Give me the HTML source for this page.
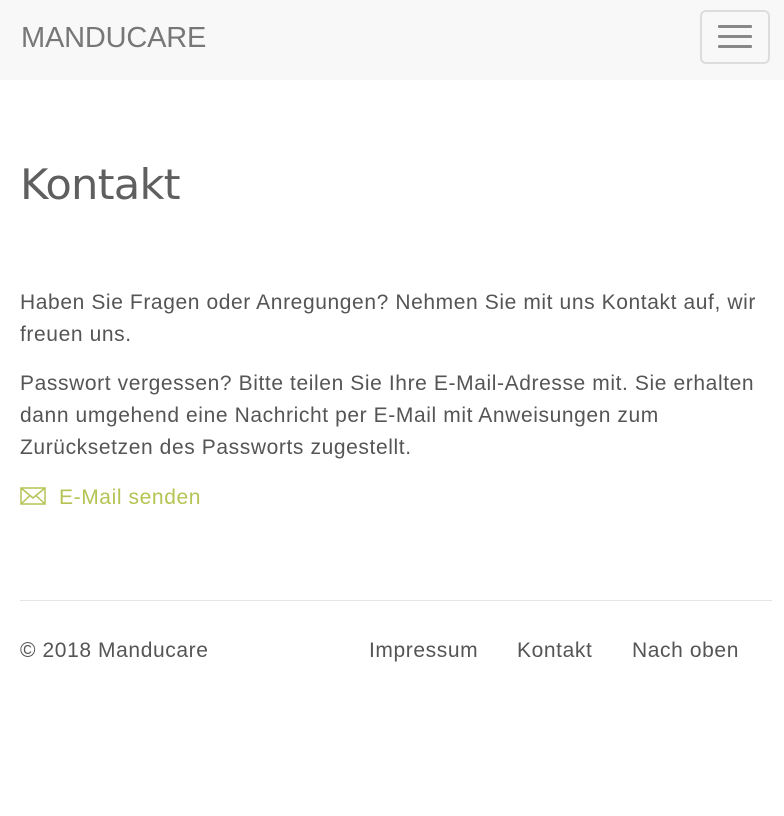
<!DOCTYPE html>
<html><head><meta charset="utf-8"><style>
*{margin:0;padding:0;box-sizing:border-box}
body{width:784px;height:816px;background:#fff;font-family:"Liberation Sans",sans-serif;color:#555;position:relative;overflow:hidden}
.nav{position:absolute;left:0;top:0;width:784px;height:80px;background:#f8f8f8}
.brand{position:absolute;left:21px;top:22px;font-size:29px;color:#777;letter-spacing:-0.2px}
.tog{position:absolute;left:700px;top:10px;width:70px;height:54px;border:2px solid #ddd;border-radius:6px}
.tog i{position:absolute;left:16px;width:34px;height:3px;background:#888;border-radius:1px}
h1{position:absolute;left:20px;top:160px;font-size:42px;font-weight:normal;color:#5f5f5f;font-family:"DejaVu Sans",sans-serif;letter-spacing:-0.8px;transform:scaleX(1.03);transform-origin:left}
p{position:absolute;left:20px;font-size:21px;letter-spacing:0.6px;line-height:32px;color:#555;width:760px}
.mail{position:absolute;left:20px;top:486px;font-size:21px;letter-spacing:0.6px;color:#b5c454}
hr{position:absolute;left:20px;top:600px;width:752px;border:0;border-top:1px solid #e5e5e5}
.f{position:absolute;top:639px;font-size:21px;letter-spacing:0.6px;color:#555}
</style></head><body>
<div class="nav"><div class="brand">MANDUCARE</div>
<div class="tog"><i style="top:13px"></i><i style="top:23px"></i><i style="top:33px"></i></div></div>
<h1>Kontakt</h1>
<p style="top:287px">Haben Sie Fragen oder Anregungen? Nehmen Sie mit uns Kontakt auf, wir freuen uns.</p>
<p style="top:368px">Passwort vergessen? Bitte teilen Sie Ihre E-Mail-Adresse mit. Sie erhalten dann umgehend eine Nachricht per E-Mail mit Anweisungen zum Zurücksetzen des Passworts zugestellt.</p>
<div class="mail"><svg width="26" height="18" viewBox="0 0 26 18" style="vertical-align:-1px;margin-right:13px"><rect x="1" y="1" width="24" height="16" fill="none" stroke="#b5c454" stroke-width="1.5"/><path d="M1 1L13 11L25 1M1 17L10 8.5M25 17L16 8.5" fill="none" stroke="#b5c454" stroke-width="1.5"/></svg>E-Mail senden</div>
<hr>
<div class="f" style="left:20px">© 2018 Manducare</div>
<div class="f" style="left:369px">Impressum</div>
<div class="f" style="left:517px">Kontakt</div>
<div class="f" style="left:632px">Nach oben</div>
</body></html>
